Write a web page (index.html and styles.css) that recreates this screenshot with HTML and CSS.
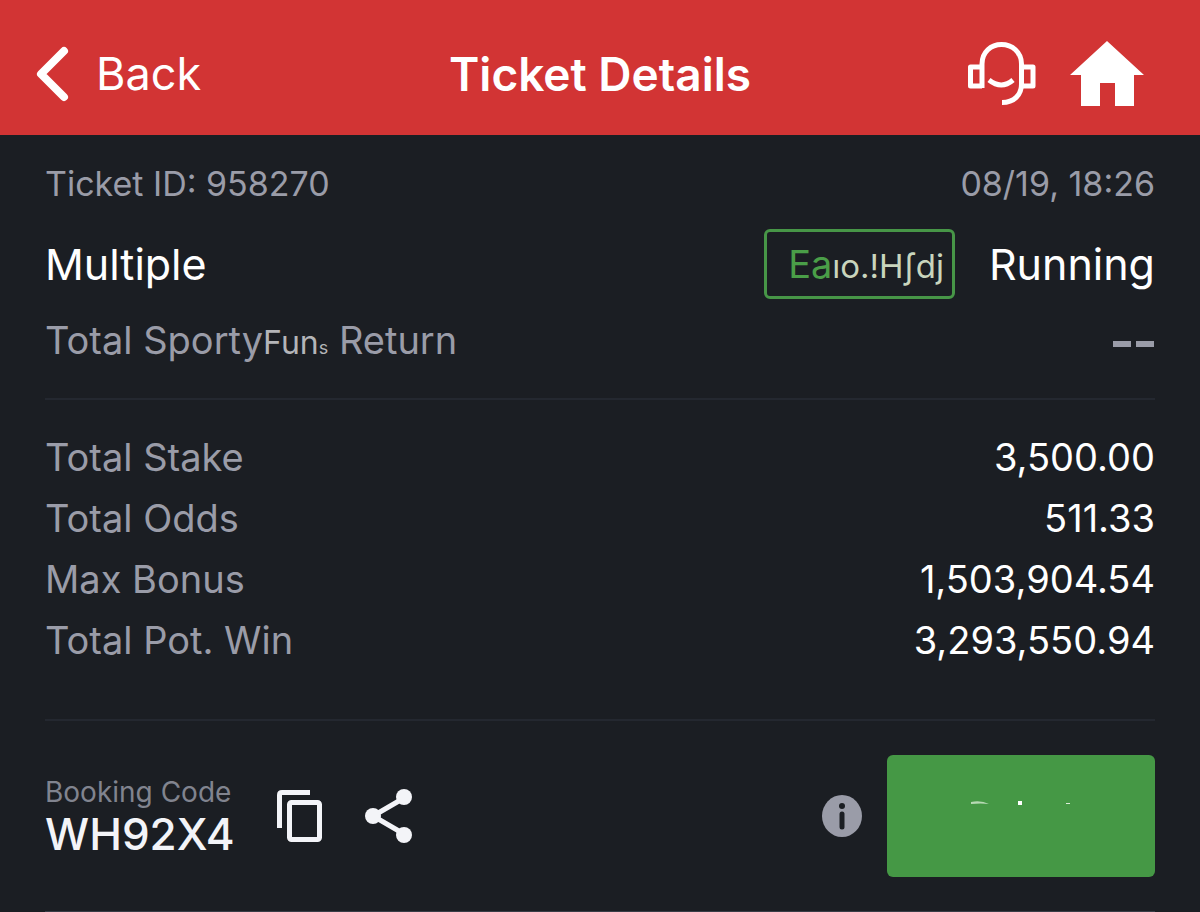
FILE: index.html
```html
<!DOCTYPE html>
<html lang="en">
<head>
<meta charset="utf-8">
<meta name="viewport" content="width=device-width, initial-scale=1">
<title>Ticket Details</title>
<link rel="stylesheet" href="styles.css">
</head>
<body>
<header class="topbar">
  <a class="back" href="#">
    <svg width="34" height="56" viewBox="0 0 34 56" aria-hidden="true"><path d="M28 5 5 28 28 51" fill="none" stroke="currentColor" stroke-width="8" stroke-linecap="round" stroke-linejoin="round"/></svg>
    <span>Back</span>
  </a>
  <h1 class="title">Ticket Details</h1>
  <nav class="tools">
    <a class="tool" href="#" aria-label="Support">
      <svg width="68" height="64" viewBox="0 0 68 64"><g fill="none" stroke="currentColor" stroke-width="5"><path d="M14 46V22C14 10 23 2.500 33.500 2.500S53.500 10 53.500 22V42C53.500 53 46 60.500 34 60.500"/><path d="M14 25H2.500V44H14M53.500 25H65V44H53.500" stroke-linejoin="round"/><path d="M21 38Q33.500 48 45 38"/></g></svg>
    </a>
    <a class="tool" href="#" aria-label="Home">
      <svg width="74" height="66" viewBox="0 0 74 66"><path d="M37 0 74 34H64V65H45V42H30V65H11V34H0Z" fill="currentColor"/></svg>
    </a>
  </nav>
</header>
<main class="ticket">
  <section class="summary">
    <div class="row meta"><span>Ticket ID: 958270</span><time>08/19, 18:26</time></div>
    <div class="row kind">
      <h2 class="name">Multiple</h2>
      <div class="state"><button class="badge" type="button">Ea<span class="badge-tail">ıo.!Hʃdj</span></button><span>Running</span></div>
    </div>
    <div class="row returns"><span class="label">Total Sporty<span class="faded">Fun<small class="faded-end">s</small></span> Return</span>
      <svg class="dashes" width="42" height="6" viewBox="0 0 42 6" role="img" aria-label="No return yet"><path d="M0 3H18M23 3H41" stroke="currentColor" stroke-width="6"/></svg>
    </div>
  </section>
  <dl class="totals">
    <div class="row"><dt>Total Stake</dt><dd>3,500.00</dd></div>
    <div class="row"><dt>Total Odds</dt><dd>511.33</dd></div>
    <div class="row"><dt>Max Bonus</dt><dd>1,503,904.54</dd></div>
    <div class="row"><dt>Total Pot. Win</dt><dd>3,293,550.94</dd></div>
  </dl>
  <section class="row booking">
    <div class="code-group">
      <div class="code-block"><span class="code-label">Booking Code</span><strong class="code">WH92X4</strong></div>
      <button class="icon-button" type="button" aria-label="Copy code">
        <svg width="46" height="52" viewBox="0 0 46 52"><g fill="none" stroke="currentColor" stroke-width="5"><path d="M2.500 38V5Q2.500 2.500 5 2.500H33"/><rect x="12.500" y="12.500" width="30" height="37" rx="2"/></g></svg>
      </button>
      <button class="icon-button" type="button" aria-label="Share">
        <svg width="48" height="54" viewBox="0 0 48 54"><path d="M39 9 8 27 39 45" fill="none" stroke="currentColor" stroke-width="5"/><g fill="currentColor"><circle cx="39" cy="8" r="8"/><circle cx="8" cy="27" r="8"/><circle cx="39" cy="46" r="8"/></g></svg>
      </button>
    </div>
    <div class="action-group">
      <button class="icon-button info" type="button" aria-label="Information">
        <svg width="40" height="42" viewBox="0 0 40 42"><ellipse cx="20" cy="21" rx="20" ry="21" fill="currentColor"/><circle cx="20" cy="11" r="3" fill="#1b1e23"/><path d="M20 19V32" stroke="#1b1e23" stroke-width="5" stroke-linecap="round"/></svg>
      </button>
      <button class="primary" type="button" aria-label="Ticket action">
        <svg width="100" height="8" viewBox="0 0 100 8"><path d="M0 2Q10 0 18 4Q10 3 0 4Z" fill="#b7d9b4"/><rect x="47" y="1" width="4" height="4" fill="#fff"/><rect x="95" y="3" width="4" height="1" fill="#dcecd8"/></svg>
      </button>
    </div>
  </section>
</main>
</body>
</html>
```
FILE: styles.css
```css
* { box-sizing: border-box; }

body {
  margin: 0;
  min-height: 100vh;
  background: #1b1e23;
  color: #fff;
  font-family: Inter, "Liberation Sans", sans-serif;
}

h1, h2, dl, dd { margin: 0; font-weight: 400; }
a { color: inherit; text-decoration: none; }
button { font: inherit; cursor: pointer; }
svg { display: block; }

.topbar {
  display: grid;
  grid-template-columns: 1fr auto 1fr;
  align-items: center;
  min-height: 135px;
  padding: 12px 56px 0 36px;
  background: #d23434;
}
.back { display: flex; align-items: center; gap: 26px; font-size: 45px; }
.title { font-size: 46px; font-weight: 600; padding-left: 20px; }
.tools { display: flex; justify-content: flex-end; align-items: center; gap: 34px; }

.ticket { padding: 0 45px; }
.row { display: flex; align-items: center; justify-content: space-between; }

.summary { padding: 24px 0 31px; border-bottom: 2px solid #242830; }
.meta { height: 48px; font-size: 34px; color: #9a9ca8; }
.kind { height: 114px; font-size: 43px; }
.name { font-size: 43px; }
.state { display: flex; align-items: center; gap: 34px; }
.badge {
  height: 70px;
  padding: 0 8px 0 21px;
  border: 3px solid #479647;
  border-radius: 6px;
  background: none;
  color: #4a9e48;
  font-size: 38px;
}
.badge-tail { color: #c9d5bd; font-size: 33px; }
.returns { height: 46px; line-height: 46px; font-size: 38px; color: #9a9ca8; }
.faded { color: #b4b5b8; font-size: 32px; }
.faded-end { font-size: 18px; }

.totals { padding: 27px 0 48px; border-bottom: 2px solid #242830; font-size: 38px; line-height: 61px; }
.totals dt { color: #9a9ca8; }

.booking { padding: 34px 0; border-bottom: 2px solid #393d47; }
.code-group, .action-group { display: flex; align-items: center; }
.code-group { gap: 42px; }
.action-group { gap: 25px; }
.code-block { display: flex; flex-direction: column; }
.code-label { font-size: 28px; line-height: 36px; color: #81848f; }
.code { font-size: 44px; line-height: 48px; font-weight: 500; color: #f3f4f8; }
.icon-button { padding: 0; border: 0; background: none; color: #f3f4f8; }
.info { color: #9a9ca8; }
.primary {
  display: flex;
  justify-content: center;
  width: 268px;
  height: 122px;
  padding: 45px 0 0;
  border: 0;
  border-radius: 6px;
  background: #459845;
}
```
